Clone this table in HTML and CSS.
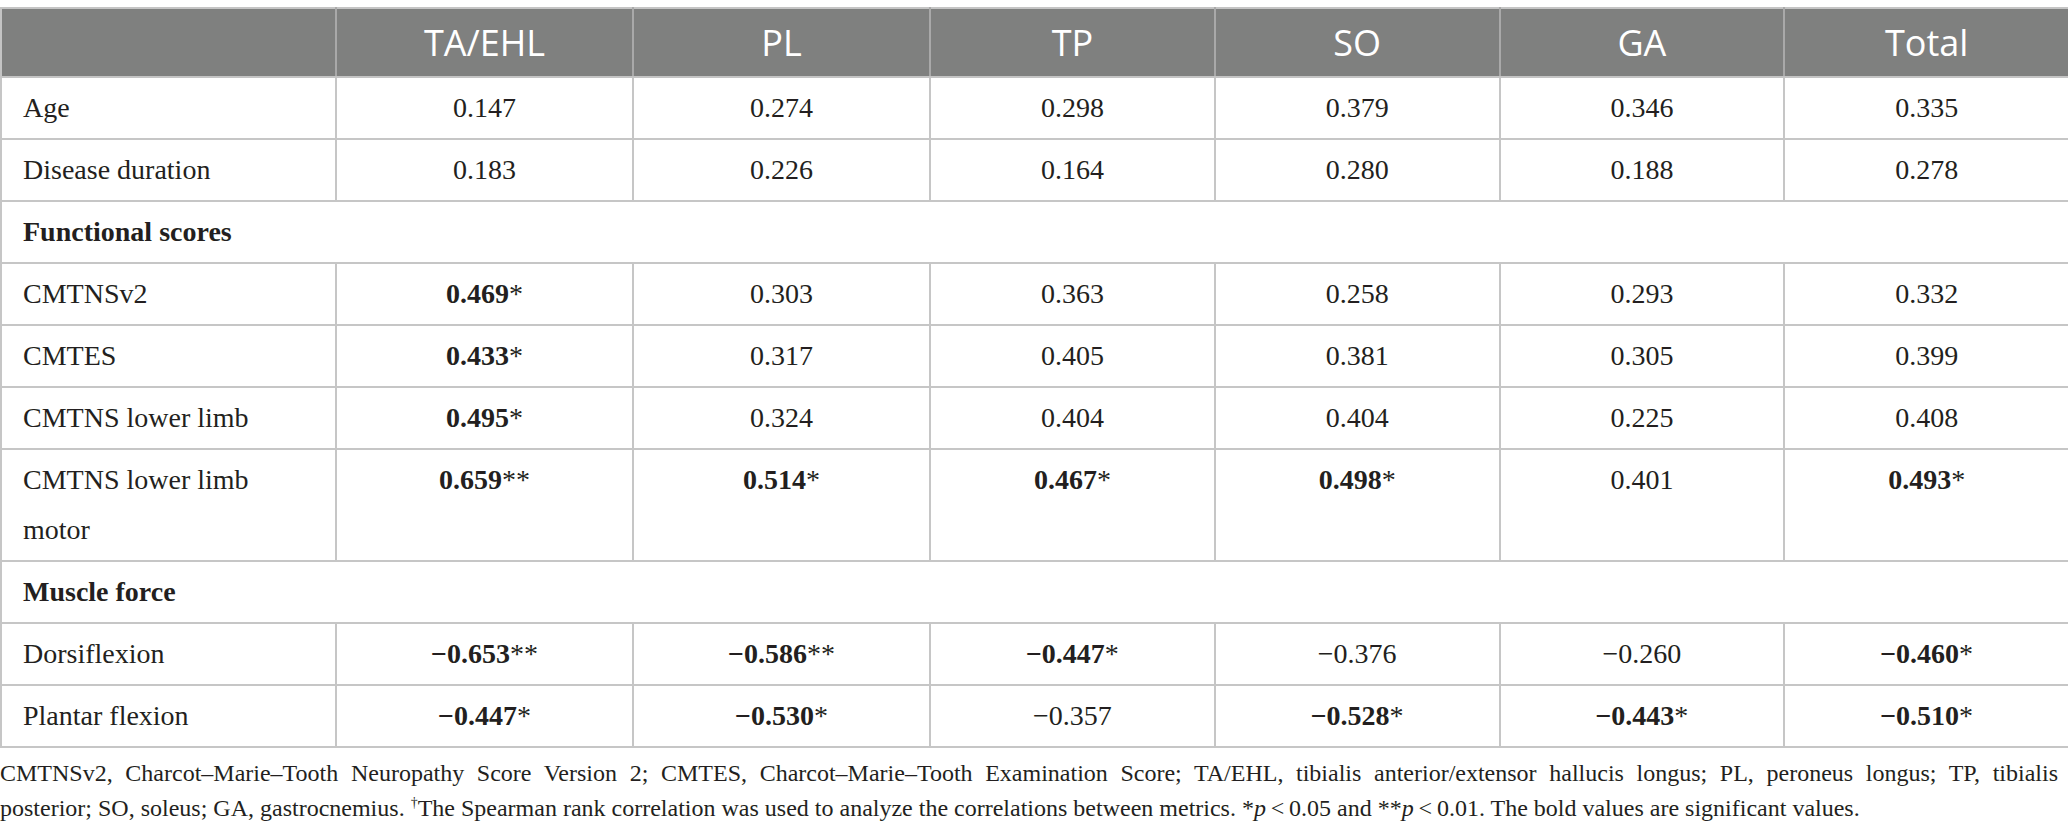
FILE: index.html
```html
<!DOCTYPE html>
<html lang="en">
<head>
<meta charset="utf-8">
<title>Correlations table</title>
<link rel="stylesheet" href="styles.css">
</head>
<body>
<div class="wrap">
<table class="data">
  <colgroup>
    <col class="c-label">
    <col class="c-wide">
    <col class="c-wide">
    <col class="c-norm">
    <col class="c-norm">
    <col class="c-norm">
    <col class="c-norm">
  </colgroup>
  <thead>
    <tr>
      <th></th>
      <th>TA/EHL</th>
      <th>PL</th>
      <th>TP</th>
      <th>SO</th>
      <th>GA</th>
      <th>Total</th>
    </tr>
  </thead>
  <tbody>
    <tr>
      <td class="lbl">Age</td>
      <td>0.147</td><td>0.274</td><td>0.298</td><td>0.379</td><td>0.346</td><td>0.335</td>
    </tr>
    <tr>
      <td class="lbl">Disease duration</td>
      <td>0.183</td><td>0.226</td><td>0.164</td><td>0.280</td><td>0.188</td><td>0.278</td>
    </tr>
    <tr class="section">
      <td colspan="7">Functional scores</td>
    </tr>
    <tr>
      <td class="lbl">CMTNSv2</td>
      <td><b>0.469</b>*</td><td>0.303</td><td>0.363</td><td>0.258</td><td>0.293</td><td>0.332</td>
    </tr>
    <tr>
      <td class="lbl">CMTES</td>
      <td><b>0.433</b>*</td><td>0.317</td><td>0.405</td><td>0.381</td><td>0.305</td><td>0.399</td>
    </tr>
    <tr>
      <td class="lbl">CMTNS lower limb</td>
      <td><b>0.495</b>*</td><td>0.324</td><td>0.404</td><td>0.404</td><td>0.225</td><td>0.408</td>
    </tr>
    <tr>
      <td class="lbl">CMTNS lower limb<br>motor</td>
      <td><b>0.659</b>**</td><td><b>0.514</b>*</td><td><b>0.467</b>*</td><td><b>0.498</b>*</td><td>0.401</td><td><b>0.493</b>*</td>
    </tr>
    <tr class="section">
      <td colspan="7">Muscle force</td>
    </tr>
    <tr>
      <td class="lbl">Dorsiflexion</td>
      <td><b>&minus;0.653</b>**</td><td><b>&minus;0.586</b>**</td><td><b>&minus;0.447</b>*</td><td>&minus;0.376</td><td>&minus;0.260</td><td><b>&minus;0.460</b>*</td>
    </tr>
    <tr>
      <td class="lbl">Plantar flexion</td>
      <td><b>&minus;0.447</b>*</td><td><b>&minus;0.530</b>*</td><td>&minus;0.357</td><td><b>&minus;0.528</b>*</td><td><b>&minus;0.443</b>*</td><td><b>&minus;0.510</b>*</td>
    </tr>
  </tbody>
</table>
<p class="note">
  <span class="line first">CMTNSv2, Charcot–Marie–Tooth Neuropathy Score Version 2; CMTES, Charcot–Marie–Tooth Examination Score; TA/EHL, tibialis anterior/extensor hallucis longus; PL, peroneus longus; TP, tibialis</span>
  <span class="line">posterior; SO, soleus; GA, gastrocnemius. <sup>†</sup>The Spearman rank correlation was used to analyze the correlations between metrics. *<i>p</i>&thinsp;&lt;&thinsp;0.05 and **<i>p</i>&thinsp;&lt;&thinsp;0.01. The bold values are significant values.</span>
</p>
</div>
</body>
</html>
```

FILE: styles.css
```css
html, body {
  margin: 0;
  padding: 0;
  background: #ffffff;
}

.wrap {
  padding-top: 7px;
  width: 2068px;
}

.data {
  width: 2068px;
  border-collapse: collapse;
  table-layout: fixed;
  font-family: "Liberation Serif", "Times New Roman", serif;
  font-size: 28px;
  color: #231f20;
}

.c-label { width: 335px; }
.c-wide { width: 297px; }
.c-norm { width: 284.75px; }

.data th {
  background: #7f807f;
  color: #ffffff;
  font-family: "Open Sans", "Noto Sans", sans-serif;
  font-weight: 400;
  font-size: 36px;
  line-height: 57px;
  padding: 5px 10px;
  text-align: center;
  border-top: 2px solid #c4c4c4;
  border-left: 2px solid #a9a9a9;
  border-right: 2px solid #a9a9a9;
  border-bottom: 2px solid #c4c4c4;
}

.data thead th:first-child {
  border-left: 2px solid #c4c4c4;
}

.data thead th:last-child {
  border-right: 2px solid #c4c4c4;
}

.data td {
  border: 2px solid #c6c6c6;
  line-height: 50px;
  padding: 5px 10px;
  text-align: center;
  vertical-align: top;
  white-space: nowrap;
}

.data td.lbl {
  text-align: left;
  padding-left: 21px;
}

.data b {
  font-weight: 700;
}

.section td {
  text-align: left;
  padding-left: 21px;
  font-weight: 700;
}

.note {
  margin: 8px 0 0 0;
  width: 2058px;
  font-family: "Liberation Serif", "Times New Roman", serif;
  font-size: 24px;
  line-height: 35px;
  color: #231f20;
}

.note .line {
  display: block;
  white-space: nowrap;
}

.note .line.first {
  white-space: normal;
  text-align: justify;
  text-align-last: justify;
}

.note sup {
  font-size: 14px;
  line-height: 0;
  vertical-align: 9px;
}
```
